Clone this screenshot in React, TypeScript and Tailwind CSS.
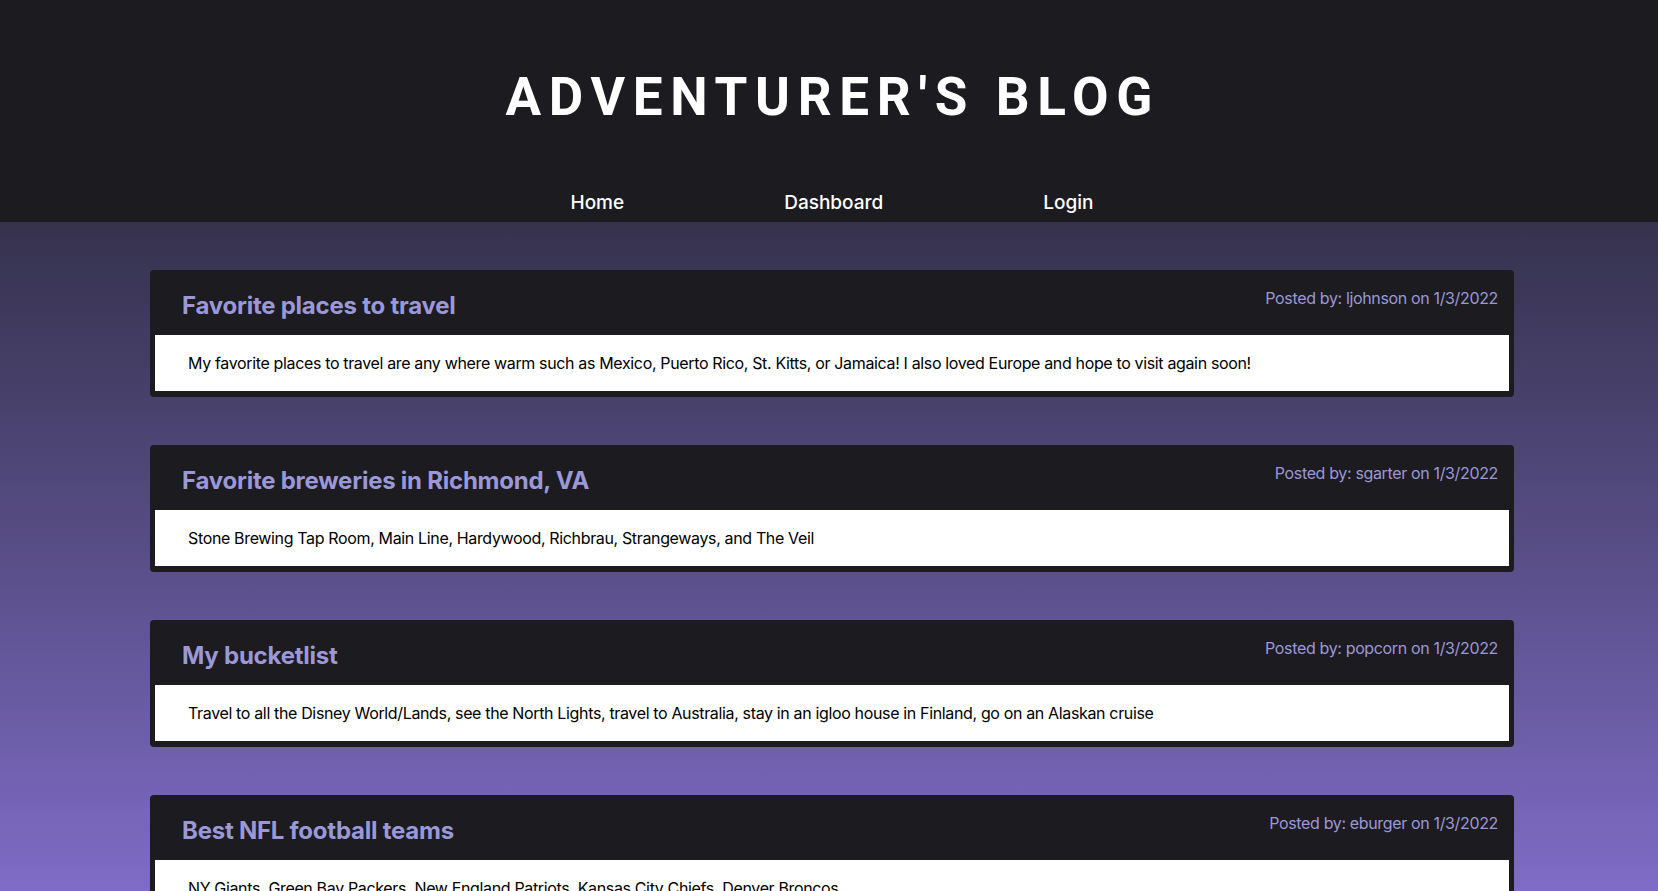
import React from "react";

const posts = [
  {
    title: "Favorite places to travel",
    author: "ljohnson",
    date: "1/3/2022",
    body: "My favorite places to travel are any where warm such as Mexico, Puerto Rico, St. Kitts, or Jamaica! I also loved Europe and hope to visit again soon!",
  },
  {
    title: "Favorite breweries in Richmond, VA",
    author: "sgarter",
    date: "1/3/2022",
    body: "Stone Brewing Tap Room, Main Line, Hardywood, Richbrau, Strangeways, and The Veil",
  },
  {
    title: "My bucketlist",
    author: "popcorn",
    date: "1/3/2022",
    body: "Travel to all the Disney World/Lands, see the North Lights, travel to Australia, stay in an igloo house in Finland, go on an Alaskan cruise",
  },
  {
    title: "Best NFL football teams",
    author: "eburger",
    date: "1/3/2022",
    body: "NY Giants, Green Bay Packers, New England Patriots, Kansas City Chiefs, Denver Broncos",
  },
];

function PostCard({ title, author, date, body }: (typeof posts)[number]) {
  return (
    <article className="w-[1364px] ml-[150px] bg-[#1c1b1f] rounded-[4px] pb-[6px]">
      {/* Header */}
      <div className="h-[65px] flex justify-between items-start pl-8 pr-4 pt-4">
        <h2 className="mt-[5px] text-[24px] leading-[30px] font-bold tracking-[-0.01em] text-[#9b98d9]">{title}</h2>
        <p className="text-base leading-6 tracking-[-0.022em] text-[#9b98d9]">
          Posted by: {author} on {date}
        </p>
      </div>
      {/* Body */}
      <div className="mx-[5px] bg-white pl-[33px] pr-8 py-4 text-base leading-6 tracking-[-0.022em] text-black">{body}</div>
    </article>
  );
}

export default function App() {
  return (
    <div className="min-h-screen bg-fixed bg-gradient-to-b from-[#20202a] to-[#7f6cc7] font-['Inter','Noto_Sans',sans-serif]">
      <header className="h-[222px] bg-[#1c1b1f] flex flex-col items-center">
        <h1 className="mt-[70px] h-[54px] leading-[54px] text-[53px] font-bold tracking-[0.145em] pl-[0.145em] text-white font-['Roboto','Liberation_Sans',sans-serif]">
          ADVENTURER'S BLOG
        </h1>
        <nav className="mt-auto mb-[5px] pl-[6px] flex gap-[160px] text-[19px] leading-[28px] font-medium text-white">
          <a href="#">Home</a>
          <a href="#">Dashboard</a>
          <a href="#">Login</a>
        </nav>
      </header>

      <main className="flex flex-col gap-12 pt-12 pb-12">
        {posts.map((p) => (
          <PostCard key={p.title} {...p} />
        ))}
      </main>
    </div>
  );
}
